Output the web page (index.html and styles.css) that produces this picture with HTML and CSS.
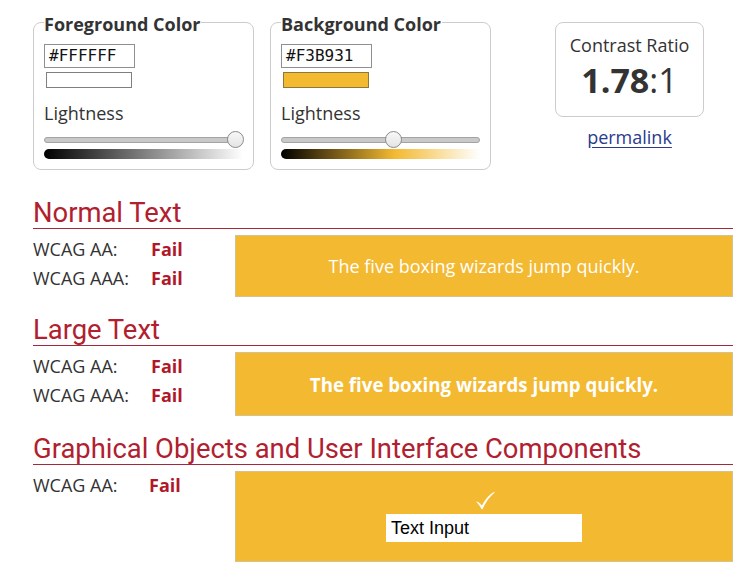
FILE: index.html
```html
<!DOCTYPE html>
<html lang="en">
<head>
<meta charset="utf-8">
<title>Contrast Checker</title>
<link rel="stylesheet" href="styles.css">
</head>
<body>
<main class="page">
  <div class="pickers">
    <fieldset class="picker">
      <legend class="picker-title">Foreground Color</legend>
      <div class="hex">#FFFFFF</div>
      <div class="swatch swatch-fg"></div>
      <div class="lightness-label">Lightness</div>
      <div class="slider">
        <div class="track"></div>
        <div class="thumb" style="left:183px"></div>
      </div>
      <div class="gradient gradient-fg"></div>
    </fieldset>
    <fieldset class="picker">
      <legend class="picker-title">Background Color</legend>
      <div class="hex">#F3B931</div>
      <div class="swatch swatch-bg"></div>
      <div class="lightness-label">Lightness</div>
      <div class="slider">
        <div class="track"></div>
        <div class="thumb" style="left:104px"></div>
      </div>
      <div class="gradient gradient-bg"></div>
    </fieldset>
    <div class="result">
      <div class="ratio-box">
        <div class="ratio-label">Contrast Ratio</div>
        <div class="ratio-value"><b>1.78</b>:1</div>
      </div>
      <a class="permalink" href="#">permalink</a>
    </div>
  </div>

  <section class="section section-first">
    <h2 class="section-title">Normal Text</h2>
    <div class="section-body">
      <div class="labels">
        <div class="label-row"><span class="label">WCAG AA:</span><span class="fail">Fail</span></div>
        <div class="label-row"><span class="label">WCAG AAA:</span><span class="fail">Fail</span></div>
      </div>
      <div class="sample sample-normal">The five boxing wizards jump quickly.</div>
    </div>
  </section>

  <section class="section">
    <h2 class="section-title">Large Text</h2>
    <div class="section-body">
      <div class="labels">
        <div class="label-row"><span class="label">WCAG AA:</span><span class="fail">Fail</span></div>
        <div class="label-row"><span class="label">WCAG AAA:</span><span class="fail">Fail</span></div>
      </div>
      <div class="sample sample-large">The five boxing wizards jump quickly.</div>
    </div>
  </section>

  <section class="section">
    <h2 class="section-title">Graphical Objects and User Interface Components</h2>
    <div class="section-body">
      <div class="labels">
        <div class="label-row"><span class="label label-short">WCAG AA:</span><span class="fail">Fail</span></div>
      </div>
      <div class="sample sample-ui">
        <svg class="check" width="20" height="19" viewBox="0 0 20 19" aria-hidden="true">
          <path d="M0.8 10.6 C2.8 10.6 4.8 12 6.9 14.4 C10 8.6 14 3.8 19.2 0.8 L19.6 1.4 C14.6 5.6 10.6 11 7.5 18.2 L6.5 18.2 C4.8 14.8 3 12.4 0.8 10.6 Z" fill="#ffffff"/>
        </svg>
        <div class="text-input">Text Input</div>
      </div>
    </div>
  </section>
</main>
</body>
</html>
```
FILE: styles.css
```css
* { box-sizing: border-box; }

body {
  margin: 0;
  background: #ffffff;
  color: #333333;
  font-family: "Open Sans", "Liberation Sans", sans-serif;
  font-size: 18px;
}

.page {
  width: 733px;
  padding: 0 0 0 33px;
}

.pickers {
  display: flex;
  align-items: flex-start;
  gap: 16px;
  padding-top: 10px;
}

.picker {
  width: 221px;
  margin: 0;
  padding: 10px 10px 10px 10px;
  border: 1px solid #cccccc;
  border-radius: 8px;
  min-width: 0;
}

.picker-title {
  padding: 0 1px 0 0;
  font-weight: 700;
  font-size: 18px;
  line-height: 24px;
  color: #333333;
  position: relative;
  top: 2px;
}

.hex {
  width: 91px;
  height: 24px;
  border: 1px solid #8f8f8f;
  padding: 0 0 0 4px;
  font-family: "DejaVu Sans Mono", "Liberation Mono", monospace;
  font-size: 16px;
  line-height: 22px;
  color: #111111;
}

.swatch {
  width: 86px;
  height: 16px;
  margin: 4px 0 0 2px;
  border: 1px solid #7f7f7f;
}

.swatch-fg { background: #ffffff; }
.swatch-bg { background: #f3b931; border-color: #8d7640; }

.lightness-label {
  margin-top: 14px;
  line-height: 23px;
  font-size: 18px;
  color: #333333;
}

.slider {
  position: relative;
  height: 17px;
  margin-top: 6px;
  display: flex;
  align-items: center;
}

.track {
  width: 100%;
  height: 6px;
  background: #c9c9c9;
  border: 1px solid #a3a3a3;
  border-radius: 3px;
}

.thumb {
  position: absolute;
  top: 0;
  width: 17px;
  height: 17px;
  border-radius: 50%;
  border: 1px solid #8a8a8a;
  background: linear-gradient(#f8f8f8, #e4e4e4);
}

.gradient {
  height: 10px;
  margin-top: 1px;
  border-radius: 5px 0 0 5px;
}

.gradient-fg { background: linear-gradient(to right, #000000, #ffffff); }
.gradient-bg { background: linear-gradient(to right, #000000 0%, #f3b931 57%, #ffffff 100%); }

.result {
  margin-left: 48px;
  padding-top: 12px;
  display: flex;
  flex-direction: column;
  align-items: center;
  width: 149px;
}

.ratio-box {
  width: 149px;
  height: 95px;
  border: 1px solid #cccccc;
  border-radius: 8px;
  padding-top: 10px;
  text-align: center;
}

.ratio-label {
  font-size: 18px;
  line-height: 24px;
}

.ratio-value {
  margin-top: 3px;
  font-size: 34px;
  line-height: 40px;
  color: #333333;
}

.ratio-value b { font-weight: 700; }

.permalink {
  margin-top: 8px;
  font-size: 18px;
  line-height: 24px;
  color: #283b8d;
  text-decoration: underline;
  text-underline-offset: 3px;
}

.section { margin-top: 18px; }
.section-first { margin-top: 28px; }

.section-title {
  margin: 0;
  font-family: Roboto, "Liberation Sans", sans-serif;
  font-weight: 400;
  font-size: 27.4px;
  line-height: 30px;
  color: #b1202f;
  border-bottom: 1px solid #a2283a;
}

.section-body {
  display: flex;
  margin-top: 6px;
}

.labels {
  width: 202px;
  flex: none;
}

.label-row {
  display: flex;
  line-height: 29px;
}

.label {
  width: 118px;
  color: #333333;
}

.label-short { width: 116px; }

.fail {
  color: #b0182a;
  font-weight: 700;
}

.sample {
  flex: 1;
  background: #f3b931;
  border: 1px solid #d6c28d;
  color: #ffffff;
  display: flex;
  align-items: center;
  justify-content: center;
}

.sample-normal {
  height: 62px;
  font-size: 18px;
}

.sample-large {
  height: 64px;
  font-size: 18.7px;
  font-weight: 700;
}

.sample-ui {
  height: 91px;
  flex-direction: column;
  justify-content: flex-start;
  padding-top: 19px;
}

.check {
  display: block;
  margin-left: 1px;
}

.text-input {
  width: 196px;
  height: 28px;
  margin-top: 4px;
  background: #ffffff;
  color: #000000;
  font-family: "Liberation Sans", Arial, sans-serif;
  font-size: 18px;
  line-height: 28px;
  padding-left: 5px;
}
```
